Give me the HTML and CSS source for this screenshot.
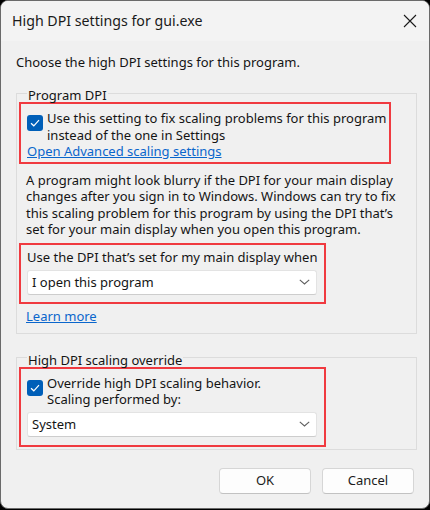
FILE: index.html
```html
<!DOCTYPE html>
<html lang="en">
<head>
<meta charset="utf-8">
<title>High DPI settings for gui.exe</title>
<link rel="stylesheet" href="styles.css">
</head>
<body>
<div class="window">
  <div class="titlebar">
    <span class="title">High DPI settings for gui.exe</span>
    <svg class="close" width="14" height="14" viewBox="0 0 14 14"><path d="M1 1 L13 13 M13 1 L1 13" stroke="#1a1a1a" stroke-width="1.1" fill="none"/></svg>
  </div>
  <div class="content">
    <p class="intro">Choose the high DPI settings for this program.</p>

    <fieldset class="group group-dpi">
      <legend>Program DPI</legend>
      <div class="hl hl-wide">
        <div class="check">
          <span class="box"><svg width="10" height="8" viewBox="0 0 10 8"><path d="M1 4.2 L3.8 6.8 L9 1.2" stroke="#fff" stroke-width="1.2" fill="none"/></svg></span>
          <span class="check-text">Use this setting to fix scaling problems for this program<br>instead of the one in Settings</span>
        </div>
        <a class="link" href="#">Open Advanced scaling settings</a>
      </div>
      <p class="desc">A program might look blurry if the DPI for your main display<br>changes after you sign in to Windows. Windows can try to fix<br>this scaling problem for this program by using the DPI that’s<br>set for your main display when you open this program.</p>
      <div class="hl hl-narrow hl-when">
        <div class="label">Use the DPI that’s set for my main display when</div>
        <div class="select"><span>I open this program</span><svg width="11" height="6" viewBox="0 0 11 6"><path d="M0.8 0.8 L5.5 5 L10.2 0.8" stroke="#5f5f5f" stroke-width="1.1" fill="none"/></svg></div>
      </div>
      <a class="link learn" href="#">Learn more</a>
    </fieldset>

    <fieldset class="group group-override">
      <legend>High DPI scaling override</legend>
      <div class="hl hl-narrow hl-override">
        <div class="check">
          <span class="box"><svg width="10" height="8" viewBox="0 0 10 8"><path d="M1 4.2 L3.8 6.8 L9 1.2" stroke="#fff" stroke-width="1.2" fill="none"/></svg></span>
          <span class="check-text">Override high DPI scaling behavior.<br>Scaling performed by:</span>
        </div>
        <div class="select"><span>System</span><svg width="11" height="6" viewBox="0 0 11 6"><path d="M0.8 0.8 L5.5 5 L10.2 0.8" stroke="#5f5f5f" stroke-width="1.1" fill="none"/></svg></div>
      </div>
    </fieldset>

    <div class="buttons">
      <button class="btn">OK</button>
      <button class="btn">Cancel</button>
    </div>
  </div>
</div>
</body>
</html>
```

FILE: styles.css
```css
* { box-sizing: border-box; }
html, body { margin: 0; padding: 0; }
body {
  background: #000;
  width: 430px;
  height: 510px;
  font-family: "Segoe UI", "Noto Sans", sans-serif;
  font-size: 13px;
  line-height: 16.3px;
  color: #141414;
}
.window {
  width: 430px;
  height: 509px;
  background: #f0f0f0;
  border: 1px solid #6a6a6a;
  border-radius: 8px;
  overflow: hidden;
  display: flex;
  flex-direction: column;
}
.titlebar {
  height: 40px;
  background: #f3f3f3;
  display: flex;
  align-items: center;
  justify-content: space-between;
  padding: 0 12px 0 11px;
}
.title {
  font-size: 14.2px;
  color: #1a1a1a;
}
.close { margin-top: -1px; }
.content {
  padding: 0 12px 0 15px;
  display: flex;
  flex-direction: column;
}
.intro {
  margin: 13px 0 0 0;
}
.group {
  margin: 13px 0 0 0;
  padding: 0 2px 0 2px;
  border: 1px solid #dcdcdc;
  min-width: 0;
}
.group legend {
  padding: 4px 1px 0 1px;
  margin-left: 8px;
  line-height: 16px;
}
.hl {
  border: 2px solid #f03a40;
  margin-top: -1px;
}
.hl-wide { width: 372px; padding: 6px 6px 3px 6px; }
.hl-narrow { width: 307px; padding: 4px 7px 7px 6px; }
.check {
  display: flex;
  align-items: flex-start;
}
.box {
  flex: none;
  width: 16px;
  height: 16px;
  margin-top: 5px;
  margin-right: 4px;
  border-radius: 3px;
  background: #005fb8;
  display: flex;
  align-items: center;
  justify-content: center;
}
.check-text { white-space: nowrap; }
.link {
  color: #0a66cc;
  text-decoration: underline;
  display: block;
  width: max-content;
}
.desc {
  margin: 8px 0 0 7px;
  white-space: nowrap;
}
.hl-when { margin-top: 6px; }
.label { white-space: nowrap; }
.select {
  margin-top: 4px;
  height: 25px;
  background: #fff;
  border: 1px solid #e3e3e3;
  border-bottom-color: #cdcdcd;
  border-radius: 3px;
  display: flex;
  align-items: center;
  justify-content: space-between;
  padding: 0 6px 0 4px;
}
.learn { margin: 4px 0 9px 7px; }
.group-override { margin-top: 14px; padding-bottom: 2px; }
.hl-override { padding: 6px 7px 8px 6px; }
.buttons {
  display: flex;
  justify-content: flex-end;
  gap: 11px;
  margin-top: 18px;
  padding-right: 3px;
}
.btn {
  width: 92px;
  height: 26px;
  font: inherit;
  color: #1b1b1b;
  background: #fdfdfd;
  border: 1px solid #d6d6d6;
  border-bottom-color: #c2c2c2;
  border-radius: 4px;
  padding: 0;
}
```
